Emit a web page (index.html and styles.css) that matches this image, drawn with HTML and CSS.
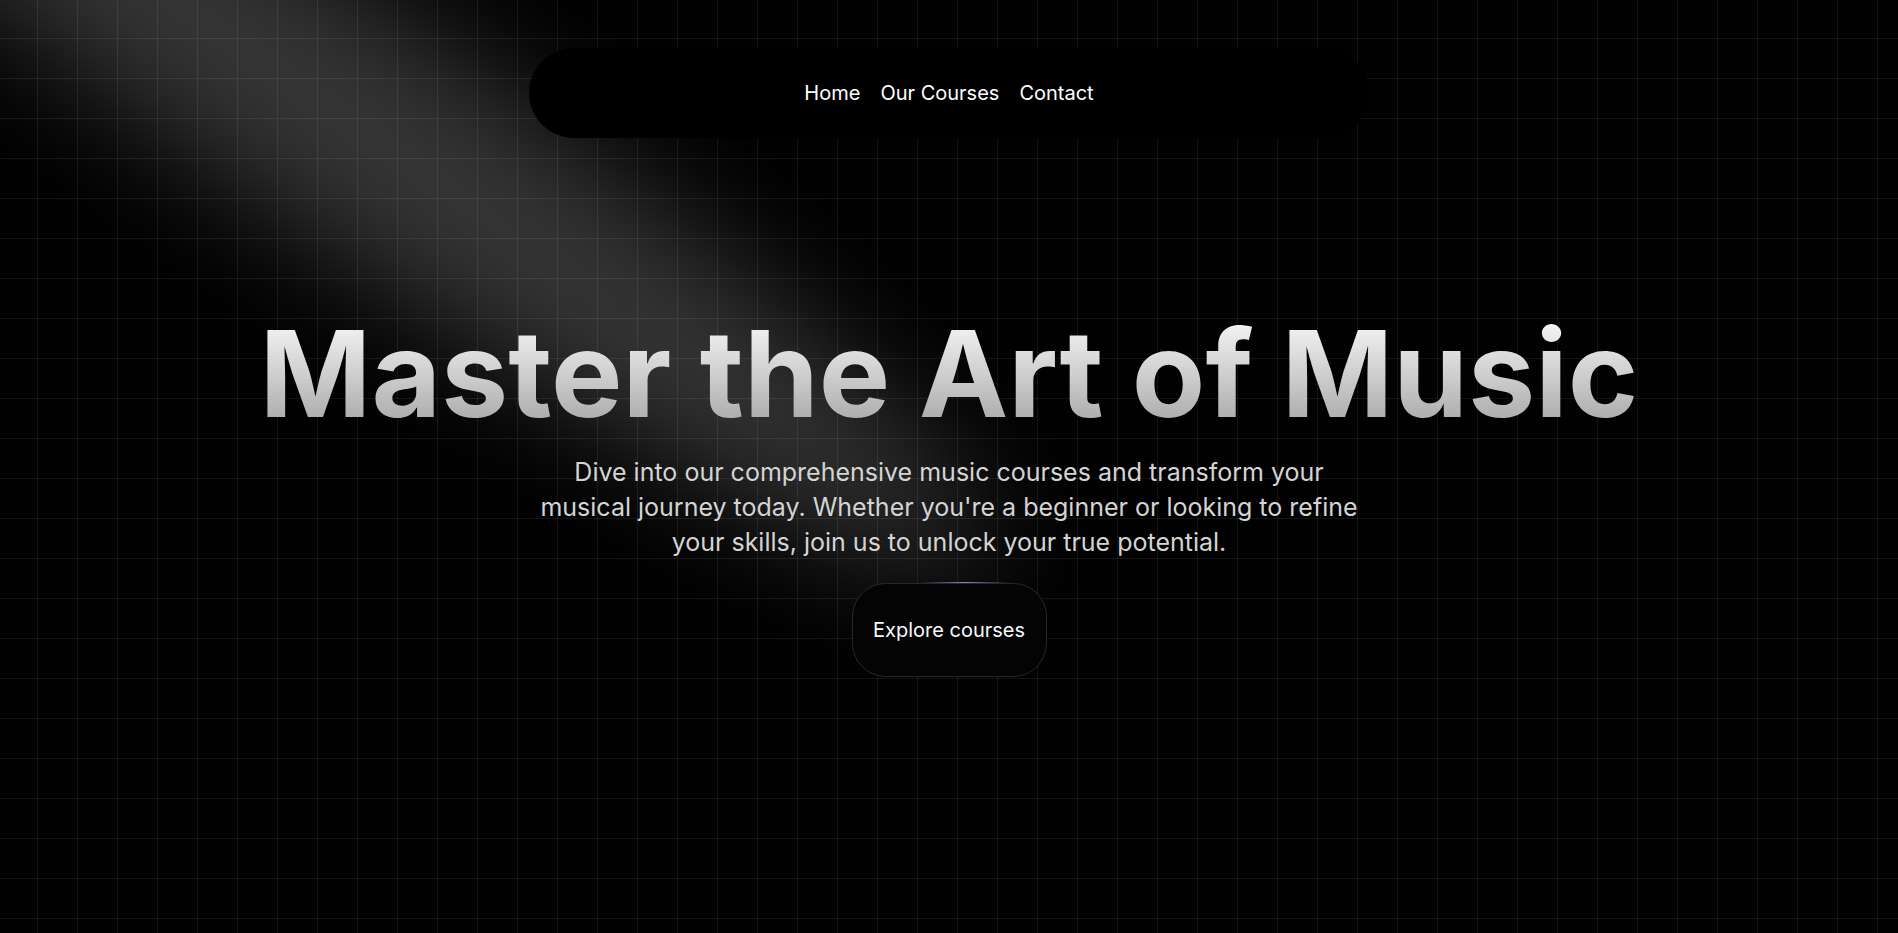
FILE: index.html
```html
<!DOCTYPE html>
<html lang="en">
<head>
<meta charset="utf-8">
<title>Music School</title>
<link rel="stylesheet" href="styles.css">
</head>
<body>
<div class="page">
  <svg class="spotlight" viewBox="0 0 3787 2842" fill="none" aria-hidden="true">
    <g filter="url(#spot-blur)">
      <ellipse cx="1924.71" cy="273.501" rx="1924.71" ry="273.501" transform="matrix(-0.822377 -0.568943 -0.568943 0.822377 3631.88 2291.09)" fill="white" fill-opacity="0.21"/>
    </g>
    <defs>
      <filter id="spot-blur" x="0.860352" y="0.838989" width="3785.16" height="2840.26" filterUnits="userSpaceOnUse" color-interpolation-filters="sRGB">
        <feFlood flood-opacity="0" result="BackgroundImageFix"/>
        <feBlend mode="normal" in="SourceGraphic" in2="BackgroundImageFix" result="shape"/>
        <feGaussianBlur stdDeviation="151" result="blur"/>
      </filter>
    </defs>
  </svg>
  <header class="nav-wrap">
    <nav class="nav">
      <a class="nav-link" href="#">Home</a>
      <a class="nav-link" href="#">Our Courses</a>
      <a class="nav-link" href="#">Contact</a>
    </nav>
  </header>
  <main class="hero">
    <h1 class="hero-title">Master the Art of Music</h1>
    <p class="hero-text">Dive into our comprehensive music courses and transform your musical journey today. Whether you're a beginner or looking to refine your skills, join us to unlock your true potential.</p>
    <a class="btn" href="#"><span class="btn-inner">Explore courses</span></a>
  </main>
</div>
</body>
</html>
```
FILE: styles.css
```css
* { box-sizing: border-box; }
html, body { margin: 0; padding: 0; }
body {
  background: #000;
  font-family: "Inter", "Noto Sans", "Liberation Sans", sans-serif;
  color: #fff;
  -webkit-font-smoothing: antialiased;
}
.page {
  position: relative;
  min-height: 100vh;
  overflow: hidden;
  background-color: #010101;
  background-image:
    linear-gradient(to right, rgba(255,255,255,0.07) 1px, transparent 1px),
    linear-gradient(to bottom, rgba(255,255,255,0.07) 1px, transparent 1px);
  background-size: 40px 40px;
  background-position: 37px 38px;
}
.spotlight {
  position: absolute;
  left: -475px;
  top: -572px;
  width: 1594px;
  height: 1352px;
  pointer-events: none;
  z-index: 1;
}
.nav-wrap {
  position: relative;
  z-index: 3;
  display: flex;
  justify-content: center;
  padding-top: 48px;
}
.nav {
  width: 840px;
  background: #000;
  border-radius: 9999px;
  padding: 30px 40px;
  display: flex;
  justify-content: center;
  gap: 20px;
  font-size: 20px;
  line-height: 30px;
}
.nav-link {
  color: #fff;
  text-decoration: none;
}
.hero {
  position: relative;
  z-index: 2;
  display: flex;
  flex-direction: column;
  align-items: center;
  text-align: center;
  padding-top: 176px;
}
.hero-title {
  margin: 0;
  font-size: 120px;
  line-height: 1;
  font-weight: 700;
  width: 100%;
  background-image: linear-gradient(to bottom, #fafafa, #a3a3a3);
  -webkit-background-clip: text;
  background-clip: text;
  color: transparent;
}
.hero-text {
  margin: 21px 0 0;
  max-width: 840px;
  font-size: 25px;
  line-height: 35px;
  color: #d4d4d4;
}
.btn {
  margin-top: 22px;
  width: 197px;
  height: 96px;
  padding: 1px;
  border-radius: 35px;
  display: flex;
  text-decoration: none;
  background: radial-gradient(ellipse 45px 14px at 58% 0%, rgba(170,185,205,0.75), rgba(170,185,205,0) 100%);
}
.btn-inner {
  flex: 1;
  display: flex;
  align-items: center;
  justify-content: center;
  background: #040405;
  border: 1px solid #1e293b;
  border-radius: 33.6px;
  color: #f8fafc;
  font-size: 20px;
}
```
